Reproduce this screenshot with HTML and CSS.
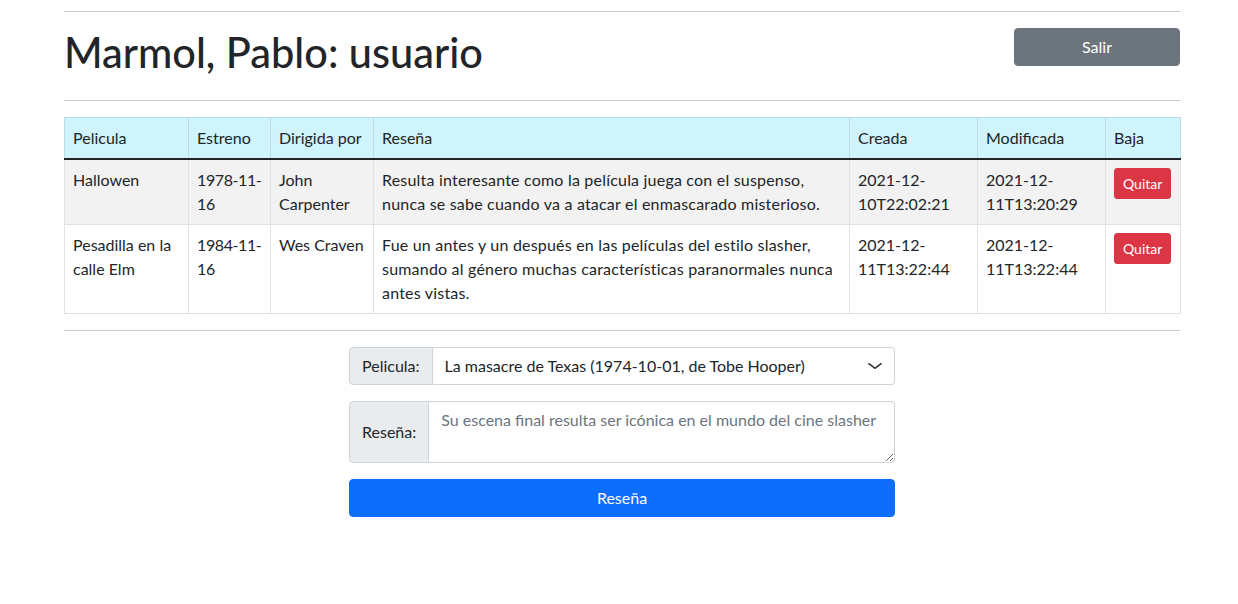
FILE: index.html
```html
<!DOCTYPE html>
<html lang="es">
<head>
<meta charset="utf-8">
<title>Marmol, Pablo: usuario</title>
<link rel="stylesheet" href="styles.css">
</head>
<body>
<main class="page">
  <hr class="rule rule-top">
  <header class="topbar">
    <h1 class="title">Marmol, Pablo: usuario</h1>
    <button class="btn btn-secondary btn-exit" type="button">Salir</button>
  </header>
  <hr class="rule">
  <table class="reviews">
    <colgroup>
      <col class="c-movie"><col class="c-date"><col class="c-dir"><col class="c-review"><col class="c-ts"><col class="c-ts"><col class="c-del">
    </colgroup>
    <thead>
      <tr>
        <th>Pelicula</th><th>Estreno</th><th>Dirigida por</th><th>Reseña</th><th>Creada</th><th>Modificada</th><th>Baja</th>
      </tr>
    </thead>
    <tbody>
      <tr class="striped">
        <td>Hallowen</td>
        <td class="date">1978-11-16</td>
        <td>John Carpenter</td>
        <td class="review">Resulta interesante como la película juega con el suspenso, nunca se sabe cuando va a atacar el enmascarado misterioso.</td>
        <td>2021-12-10T22:02:21</td>
        <td>2021-12-11T13:20:29</td>
        <td><button class="btn btn-danger btn-sm" type="button">Quitar</button></td>
      </tr>
      <tr>
        <td>Pesadilla en la calle Elm</td>
        <td class="date">1984-11-16</td>
        <td>Wes Craven</td>
        <td class="review">Fue un antes y un después en las películas del estilo slasher, sumando al género muchas características paranormales nunca antes vistas.</td>
        <td>2021-12-11T13:22:44</td>
        <td>2021-12-11T13:22:44</td>
        <td><button class="btn btn-danger btn-sm" type="button">Quitar</button></td>
      </tr>
    </tbody>
  </table>
  <hr class="rule">
  <form class="review-form">
    <div class="input-group">
      <label class="group-label" for="movie">Pelicula:</label>
      <div class="select-wrap">
        <select id="movie" class="field select">
          <option>La masacre de Texas (1974-10-01, de Tobe Hooper)</option>
        </select>
        <svg class="chevron" viewBox="0 0 16 16" width="16" height="12" preserveAspectRatio="none" aria-hidden="true"><path d="M2 5l6 6 6-6" fill="none" stroke="#343a40" stroke-width="2" stroke-linecap="round" stroke-linejoin="round"/></svg>
      </div>
    </div>
    <div class="input-group">
      <label class="group-label" for="text">Reseña:</label>
      <textarea id="text" class="field area" placeholder="Su escena final resulta ser icónica en el mundo del cine slasher"></textarea>
    </div>
    <button class="btn btn-primary btn-block" type="button">Reseña</button>
  </form>
</main>
</body>
</html>
```

FILE: styles.css
```css
* { box-sizing: border-box; }
html, body { margin: 0; padding: 0; background: #fff; }
body {
  font-family: Lato, "Noto Sans", sans-serif;
  font-size: 16px;
  line-height: 24px;
  color: #212529;
}
.page {
  width: 1116px;
  margin-left: 64px;
  padding-top: 11px;
}
.rule {
  border: 0;
  border-top: 1px solid #c8c9ca;
  margin: 16px 0;
  height: 0;
}
.rule-top { margin-top: 0; }
.topbar {
  display: flex;
  justify-content: space-between;
  align-items: flex-start;
}
.title {
  margin: 0 0 8px;
  font-size: 41.5px;
  font-weight: 500;
  line-height: 48px;
}
.btn {
  font-family: inherit;
  font-size: 16px;
  line-height: 24px;
  border: 1px solid transparent;
  border-radius: 4px;
  padding: 6px 12px;
  color: #fff;
  cursor: pointer;
}
.btn-secondary { background: #6c757d; border-color: #6c757d; }
.btn-danger { background: #dc3545; border-color: #dc3545; }
.btn-primary { background: #0d6efd; border-color: #0d6efd; }
.btn-exit { width: 166px; height: 38px; }
.btn-sm { font-size: 14px; padding: 3px 8px; border-radius: 3px; line-height: 23px; }
.btn-block { display: block; width: 100%; height: 38px; }

.reviews {
  width: 100%;
  table-layout: fixed;
  border-collapse: collapse;
  margin-bottom: 16px;
}
.c-movie { width: 124px; }
.c-date { width: 82px; }
.c-dir { width: 103px; }
.c-review { width: 476px; }
.c-ts { width: 128px; }
.c-del { width: 75px; }
.reviews th, .reviews td {
  padding: 8px;
  text-align: left;
  vertical-align: top;
  font-weight: 400;
  border: 1px solid #dee2e6;
}
.reviews td.date { letter-spacing: -0.4px; }
.reviews td.review { letter-spacing: 0.2px; }
.reviews thead th {
  background: #cff4fc;
  border-color: #badce3;
  border-bottom: 2px solid #212529;
}
.reviews tbody tr.striped td { background: #f2f2f2; }

.review-form {
  width: 546px;
  margin: 0 auto;
  display: flex;
  flex-direction: column;
  gap: 16px;
}
.input-group {
  display: flex;
  align-items: stretch;
}
.group-label {
  display: flex;
  align-items: center;
  padding: 6px 12px;
  background: #e9ecef;
  border: 1px solid #ced4da;
  border-radius: 4px 0 0 4px;
  color: #212529;
  white-space: nowrap;
}
.select-wrap {
  position: relative;
  flex: 1;
  display: flex;
}
.field {
  flex: 1;
  font-family: inherit;
  font-size: 16px;
  line-height: 24px;
  color: #212529;
  background: #fff;
  border: 1px solid #ced4da;
  border-left: 0;
  border-radius: 0 4px 4px 0;
  padding: 6px 12px;
  margin: 0;
}
.select {
  appearance: none;
  -webkit-appearance: none;
  height: 38px;
  padding-right: 36px;
}
.chevron {
  position: absolute;
  right: 12px;
  top: 13px;
  pointer-events: none;
}
.area {
  height: 62px;
  resize: vertical;
}
.area::placeholder { color: #6c757d; opacity: 1; }
```
